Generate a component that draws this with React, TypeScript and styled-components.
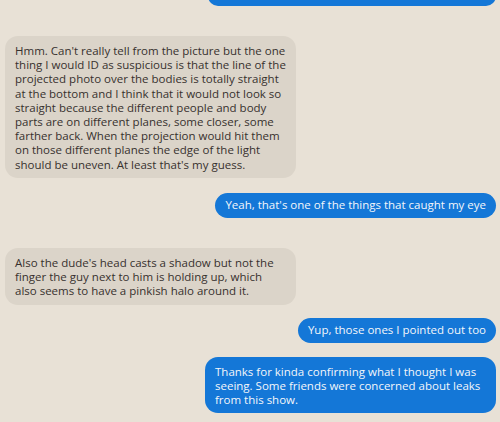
import React from 'react';
import { createGlobalStyle, styled, css } from 'styled-components';

const Global = createGlobalStyle`
  html, body {
    margin: 0;
    background: #e8e1d6;
    overflow: hidden;
  }
  body {
    font-family: "Open Sans", "Noto Sans", sans-serif;
    font-size: 11.5px;
    line-height: 14.2px;
  }
`;

type Side = 'in' | 'out';

type Message = {
  id: number;
  side: Side;
  lines: string[];
  gap: number;
};

const messages: Message[] = [
  {
    id: 1,
    side: 'in',
    gap: 30,
    lines: [
      "Hmm. Can't really tell from the picture but the one",
      'thing I would ID as suspicious is that the line of the',
      'projected photo over the bodies is totally straight',
      'at the bottom and I think that it would not look so',
      'straight because the different people and body',
      'parts are on different planes, some closer, some',
      'farther back. When the projection would hit them',
      'on those different planes the edge of the light',
      "should be uneven. At least that's my guess.",
    ],
  },
  {
    id: 2,
    side: 'out',
    gap: 15,
    lines: ["Yeah, that's one of the things that caught my eye"],
  },
  {
    id: 3,
    side: 'in',
    gap: 30,
    lines: [
      "Also the dude's head casts a shadow but not the",
      'finger the guy next to him is holding up, which',
      'also seems to have a pinkish halo around it.',
    ],
  },
  {
    id: 4,
    side: 'out',
    gap: 13,
    lines: ['Yup, those ones I pointed out too'],
  },
  {
    id: 5,
    side: 'out',
    gap: 14,
    lines: [
      'Thanks for kinda confirming what I thought I was',
      'seeing. Some friends were concerned about leaks',
      'from this show.',
    ],
  },
];

const Thread = styled.main`
  display: flex;
  flex-direction: column;
  padding: 0 4px 0 5px;
`;

const Bubble = styled.div<{ $side: Side; $wrapped: boolean; $gap: number }>`
  box-sizing: border-box;
  margin-top: ${({ $gap }) => $gap}px;
  border-radius: 13px;
  ${({ $side }) =>
    $side === 'in'
      ? css`
          align-self: flex-start;
          background: #dbd4c9;
          color: #37312e;
        `
      : css`
          align-self: flex-end;
          background: #1477d7;
          color: #f3f6fa;
        `}
  ${({ $wrapped }) =>
    $wrapped
      ? css`
          width: 291px;
          padding: 8px 10px 6px 10px;
        `
      : css`
          padding: 5px 10px 6px 10px;
        `}
`;

// the previous message, scrolled mostly out of view
const CutBubble = styled.div`
  align-self: flex-end;
  width: 288px;
  height: 20px;
  margin-top: -14px;
  border-radius: 13px;
  background: #1477d7;
`;

const Line = styled.div`
  white-space: nowrap;
`;

const App: React.FC = () => (
  <>
    <Global />
    <Thread>
      <CutBubble />
      {messages.map((m) => (
        <Bubble key={m.id} $side={m.side} $wrapped={m.lines.length > 1} $gap={m.gap}>
          {m.lines.map((l) => (
            <Line key={l}>{l}</Line>
          ))}
        </Bubble>
      ))}
    </Thread>
  </>
);

export default App;
